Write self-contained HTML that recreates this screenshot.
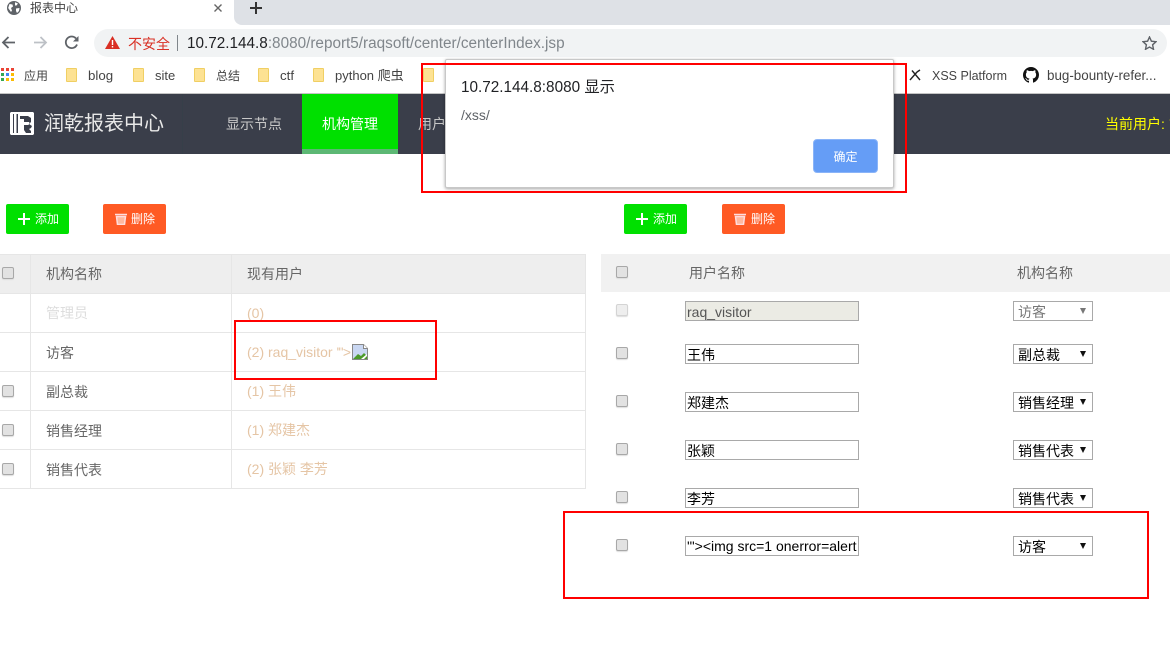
<!DOCTYPE html>
<html><head><meta charset="utf-8"><style>
html,body{margin:0;padding:0;background:#fff}
body{width:1170px;height:654px;position:relative;overflow:hidden;font-family:"Liberation Sans","Noto Sans CJK SC",sans-serif;font-size:14px}
.a{position:absolute;white-space:nowrap}
.t{position:absolute;white-space:nowrap;line-height:20px;height:20px}
.bm{position:absolute;top:68px;width:11px;height:14px;background:#fde293;border:1px solid #f0cf63;box-sizing:border-box;border-radius:1px}
.bmt{position:absolute;top:66px;line-height:20px;font-size:13px;color:#444;white-space:nowrap}
.cb{position:absolute;width:10px;height:10px;border:1px solid #a8a8a8;border-radius:2px;background:#e2e2e2;box-sizing:content-box;box-shadow:0 1px 1px #ddd}
.hl{position:absolute;background:#e6e6e6;height:1px;left:0;width:586px}
.inp{position:absolute;left:685px;width:174px;height:20px;border:1px solid #a9a9a9;box-sizing:border-box;font-size:14px;line-height:20px;padding-left:1px;color:#000;overflow:hidden;white-space:nowrap;background:#fff}
.sel{position:absolute;left:1013px;width:80px;height:20px;border:1px solid #a9a9a9;box-sizing:border-box;font-size:14px;line-height:21px;padding-left:4px;color:#000;background:#fff;white-space:nowrap;overflow:hidden}
.sel i{position:absolute;right:6px;top:6px;width:0;height:0;border-left:3px solid transparent;border-right:3px solid transparent;border-top:6px solid #111}
.btn{position:absolute;top:204px;height:30px;border-radius:2px;color:#fff;font-size:12px;line-height:30px;white-space:nowrap}
.red{position:absolute;border:2px solid #f00;box-sizing:border-box}
.c1{left:46px;color:#666}
.c2{left:247px;color:#e5c5a5;font-size:14px}
</style></head><body>

<!-- Tab strip -->
<div class="a" style="left:234px;top:0;width:936px;height:25px;background:#dee1e6;border-bottom-left-radius:8px"></div>
<svg class="a" style="left:7px;top:1px" width="14" height="14" viewBox="0 0 14 14"><circle cx="7" cy="7" r="7" fill="#5f6368"/><path d="M2.500 3l3 .5.500 2-2 1.500 1 2.500-1 1.500L1.200 7zM8 1.200l3 1.300-1.500 2H8zM9 7.500l3.500-.5-.5 3-2 2-1-2z" fill="#fff"/></svg>
<div class="a" style="left:30px;top:0;line-height:17px;font-size:12px;color:#444">报表中心</div>
<svg class="a" style="left:213px;top:3px" width="10" height="10" viewBox="0 0 10 10"><path d="M1.500 1.500l7 7M8.500 1.500l-7 7" stroke="#666" stroke-width="1.400"/></svg>
<svg class="a" style="left:250px;top:2px" width="12" height="12" viewBox="0 0 12 12"><path d="M6 0v12M0 6h12" stroke="#333" stroke-width="2"/></svg>

<!-- Toolbar -->
<svg class="a" style="left:1px;top:35px" width="15" height="15" viewBox="0 0 15 15"><path d="M14 7.500H2M7.500 2L2 7.500 7.500 13" fill="none" stroke="#5f6368" stroke-width="1.800"/></svg>
<svg class="a" style="left:33px;top:35px" width="15" height="15" viewBox="0 0 15 15"><path d="M1 7.500h12M7.500 2L13 7.500 7.500 13" fill="none" stroke="#bdc1c6" stroke-width="1.800"/></svg>
<svg class="a" style="left:64px;top:35px" width="16" height="15" viewBox="0 0 16 15"><path d="M13 9.500A5.800 5.800 0 1 1 12 3.500" fill="none" stroke="#5f6368" stroke-width="1.800"/><path d="M14.500 1v5.500H9z" fill="#5f6368"/></svg>
<div class="a" style="left:94px;top:29px;width:1073px;height:28px;background:#f1f3f4;border-radius:14px"></div>
<svg class="a" style="left:105px;top:36px" width="15" height="13" viewBox="0 0 15 13"><path d="M7.500 0L15 13H0z" fill="#d93025"/><path d="M6.800 4h1.400v5H6.800zM6.800 10h1.400v1.500H6.800z" fill="#fff"/></svg>
<div class="a" style="left:128px;top:35px;line-height:18px;font-size:14px;color:#d93025">不安全</div>
<div class="a" style="left:177px;top:35px;width:1px;height:16px;background:#80868b"></div>
<div class="a" style="left:187px;top:35px;line-height:18px;font-size:15.300px;color:#80868b"><span style="color:#202124">10.72.144.8</span>:8080/report5/raqsoft/center/centerIndex.jsp</div>
<svg class="a" style="left:1142px;top:36px" width="15" height="14" viewBox="0 0 15 14"><path d="M7.500 1l1.900 4.200 4.600.5-3.400 3.100.9 4.500-4-2.300-4 2.300.9-4.500L1 5.700l4.600-.5z" fill="none" stroke="#5f6368" stroke-width="1.400"/></svg>

<!-- Bookmarks -->
<svg class="a" style="left:1px;top:68px" width="14" height="14" viewBox="0 0 14 14"><rect x="0" y="0" width="3" height="3" fill="#ea4335"/><rect x="5" y="0" width="3" height="3" fill="#ea4335"/><rect x="10" y="0" width="3" height="3" fill="#ea4335"/><rect x="0" y="5" width="3" height="3" fill="#34a853"/><rect x="5" y="5" width="3" height="3" fill="#4285f4"/><rect x="10" y="5" width="3" height="3" fill="#fbbc04"/><rect x="0" y="10" width="3" height="3" fill="#34a853"/><rect x="5" y="10" width="3" height="3" fill="#fbbc04"/><rect x="10" y="10" width="3" height="3" fill="#fbbc04"/></svg>
<div class="bmt" style="left:24px;font-size:12px">应用</div>
<div class="bm" style="left:66px"></div><div class="bmt" style="left:88px;font-size:13.300px">blog</div>
<div class="bm" style="left:133px"></div><div class="bmt" style="left:155px">site</div>
<div class="bm" style="left:194px"></div><div class="bmt" style="left:216px;font-size:12px">总结</div>
<div class="bm" style="left:258px"></div><div class="bmt" style="left:280px;font-size:13.300px">ctf</div>
<div class="bm" style="left:313px"></div><div class="bmt" style="left:335px">python 爬虫</div>
<div class="bm" style="left:423px"></div>
<svg class="a" style="left:909px;top:69px" width="12" height="12" viewBox="0 0 12 12"><path d="M1 11L8 3M3 1.500L11 11M8 3l3-2" stroke="#222" stroke-width="1.400" fill="none"/></svg>
<div class="bmt" style="left:932px;font-size:12.500px">XSS Platform</div>
<svg class="a" style="left:1023px;top:67px" width="16" height="16" viewBox="0 0 16 16"><path fill="#111" d="M8 0C3.580 0 0 3.580 0 8c0 3.540 2.290 6.530 5.470 7.590.4.070.55-.17.55-.38 0-.19-.01-.82-.01-1.490-2.010.37-2.530-.49-2.690-.94-.09-.23-.48-.94-.82-1.130-.28-.15-.68-.52-.01-.53.630-.01 1.080.58 1.230.82.720 1.210 1.870.87 2.330.66.070-.52.280-.87.510-1.070-1.780-.2-3.640-.89-3.640-3.950 0-.87.310-1.590.820-2.150-.08-.2-.36-1.020.080-2.120 0 0 .67-.21 2.200.82.640-.18 1.320-.27 2-.27s1.360.09 2 .27c1.530-1.040 2.200-.82 2.200-.82.440 1.100.16 1.920.08 2.120.51.560.82 1.270.82 2.150 0 3.070-1.870 3.750-3.650 3.950.29.250.54.730.54 1.480 0 1.070-.01 1.930-.01 2.200 0 .21.150.46.550.38A8.010 8.010 0 0 0 16 8c0-4.420-3.580-8-8-8z"/></svg>
<div class="bmt" style="left:1047px;font-size:13.400px">bug-bounty-refer...</div>
<div class="a" style="left:0;top:93px;width:1170px;height:1px;background:#c4c4c4"></div>

<!-- Nav -->
<div class="a" style="left:0;top:94px;width:1170px;height:60px;background:#3a3e4a"></div>
<div class="a" style="left:182px;top:94px;width:1px;height:60px;background:#363f49"></div>
<svg class="a" style="left:10px;top:112px" width="24" height="23" viewBox="0 0 24 23"><path fill="#fff" d="M1 0h22l1 1v21l-1 1H1l-1-1V1z"/><path fill="#3a3e4a" d="M3 2h1v19H3zM6.500 2H8v19H6.500z"/><path fill="#3a3e4a" d="M10 4h8l3 2v4l-2 2 3 2-1 2-2 1 2 2v2h-5l-2-3v-5h4l2-1-1-2h-5v-3h3V7h-7z"/></svg>
<div class="a" style="left:44px;top:110px;line-height:29px;font-size:20px;color:#e8e8e8">润乾报表中心</div>
<div class="a" style="left:226px;top:114px;line-height:21px;color:#c8c8c8">显示节点</div>
<div class="a" style="left:302px;top:94px;width:96px;height:60px;background:#00e000"></div>
<div class="a" style="left:302px;top:149px;width:96px;height:5px;background:#5cb874"></div>
<div class="a" style="left:322px;top:114px;line-height:21px;color:#fff">机构管理</div>
<div class="a" style="left:418px;top:114px;line-height:21px;color:#c8c8c8">用户</div>
<div class="a" style="left:1105px;top:114px;line-height:21px;color:#ffff00;font-size:14px">当前用户:<span style="margin-left:4px">管</span></div>

<!-- Left buttons -->
<div class="btn" style="left:6px;width:63px;background:#00e000"><svg class="a" style="left:12px;top:9px" width="12" height="12" viewBox="0 0 12 12"><path d="M6 0v12M0 6h12" stroke="#fff" stroke-width="2"/></svg><span class="a" style="left:29px">添加</span></div>
<div class="btn" style="left:103px;width:63px;background:#ff5a24"><svg class="a" style="left:12px;top:9px" width="12" height="12" viewBox="0 0 12 12"><path d="M0 1.500h12M1.500 3.500h9l-1 8h-7z" stroke="#fdd" stroke-width="1.500" fill="#ffb9a0"/></svg><span class="a" style="left:28px">删除</span></div>
<!-- Right buttons -->
<div class="btn" style="left:624px;width:63px;background:#00e000"><svg class="a" style="left:12px;top:9px" width="12" height="12" viewBox="0 0 12 12"><path d="M6 0v12M0 6h12" stroke="#fff" stroke-width="2"/></svg><span class="a" style="left:29px">添加</span></div>
<div class="btn" style="left:722px;width:63px;background:#ff5a24"><svg class="a" style="left:12px;top:9px" width="12" height="12" viewBox="0 0 12 12"><path d="M0 1.500h12M1.500 3.500h9l-1 8h-7z" stroke="#fdd" stroke-width="1.500" fill="#ffb9a0"/></svg><span class="a" style="left:29px">删除</span></div>

<!-- Left table -->
<div class="a" style="left:0;top:254px;width:586px;height:39px;background:#eee"></div>
<div class="hl" style="top:254px"></div><div class="hl" style="top:293px"></div><div class="hl" style="top:332px"></div><div class="hl" style="top:371px"></div><div class="hl" style="top:410px"></div><div class="hl" style="top:449px"></div><div class="hl" style="top:488px"></div>
<div class="a" style="left:30px;top:254px;width:1px;height:235px;background:#e6e6e6"></div>
<div class="a" style="left:231px;top:254px;width:1px;height:235px;background:#e6e6e6"></div>
<div class="a" style="left:585px;top:254px;width:1px;height:235px;background:#e6e6e6"></div>
<div class="cb" style="left:2px;top:267px"></div><div class="cb" style="left:2px;top:385px"></div><div class="cb" style="left:2px;top:424px"></div><div class="cb" style="left:2px;top:463px"></div>
<div class="t c1" style="top:264px">机构名称</div><div class="t" style="left:247px;top:264px;color:#666">现有用户</div>
<div class="t c1" style="top:303px;color:#ddd">管理员</div><div class="t c2" style="top:303px">(0)</div>
<div class="t c1" style="top:343px">访客</div><div class="t c2" style="top:342px">(2) raq_visitor <span style="letter-spacing:-.6px">'"&gt;</span></div>
<svg class="a" style="left:352px;top:344px" width="16" height="16" viewBox="0 0 16 16"><path d="M.5.500h11l4 4v11H.5z" fill="#c9d7f2" stroke="#888"/><path d="M1 15l5-5 3 2 3-3 3 3v3z" fill="#4c9a2a"/><path d="M11.500.500v4h4" fill="#fff" stroke="#888"/><path d="M9 15l6-5v2l-3 3z" fill="#fff"/></svg>
<div class="t c1" style="top:382px">副总裁</div><div class="t c2" style="top:381px">(1) 王伟</div>
<div class="t c1" style="top:421px">销售经理</div><div class="t c2" style="top:420px">(1) 郑建杰</div>
<div class="t c1" style="top:460px">销售代表</div><div class="t c2" style="top:459px">(2) 张颖 李芳</div>

<!-- Right table -->
<div class="a" style="left:601px;top:254px;width:569px;height:38px;background:#f1f1f1"></div>
<div class="cb" style="left:616px;top:266px"></div>
<div class="t" style="left:689px;top:263px;color:#666">用户名称</div>
<div class="t" style="left:1017px;top:263px;color:#666">机构名称</div>

<div class="cb" style="left:616px;top:304px;background:#eee;border-color:#d4d4d4"></div>
<div class="inp" style="top:301px;background:#ebebe4;color:#555">raq_visitor</div>
<div class="sel" style="top:301px;color:#777">访客<i style="border-top-color:#777"></i></div>

<div class="cb" style="left:616px;top:347px"></div>
<div class="inp" style="top:344px">王伟</div><div class="sel" style="top:344px">副总裁<i></i></div>
<div class="cb" style="left:616px;top:395px"></div>
<div class="inp" style="top:392px">郑建杰</div><div class="sel" style="top:392px">销售经理<i></i></div>
<div class="cb" style="left:616px;top:443px"></div>
<div class="inp" style="top:440px">张颖</div><div class="sel" style="top:440px">销售代表<i></i></div>
<div class="cb" style="left:616px;top:491px"></div>
<div class="inp" style="top:488px">李芳</div><div class="sel" style="top:488px">销售代表<i></i></div>
<div class="cb" style="left:616px;top:539px"></div>
<div class="inp" style="top:536px;font-size:14px;line-height:18px">'"&gt;&lt;img src=1 onerror=alert</div><div class="sel" style="top:536px">访客<i></i></div>

<!-- Dialog -->
<div class="a" style="left:445px;top:59px;width:449px;height:129px;background:#fff;border:1px solid #c8c8c8;box-sizing:border-box;border-radius:2px;box-shadow:0 1px 3px rgba(0,0,0,.35)"></div>
<div class="a" style="left:461px;top:78px;line-height:20px;font-size:15.300px;color:#202124">10.72.144.8:8080 显示</div>
<div class="a" style="left:461px;top:106px;line-height:18px;font-size:14px;color:#5f6368">/xss/</div>
<div class="a" style="left:813px;top:139px;width:65px;height:34px;background:#659df6;border:1px solid #8ab4f8;box-sizing:border-box;border-radius:4px;color:#fff;font-size:12px;line-height:35px;text-align:center">确定</div>

<!-- Annotations -->
<div class="red" style="left:421px;top:63px;width:486px;height:130px"></div>
<div class="red" style="left:234px;top:320px;width:203px;height:60px"></div>
<div class="red" style="left:563px;top:511px;width:586px;height:88px"></div>
</body></html>
